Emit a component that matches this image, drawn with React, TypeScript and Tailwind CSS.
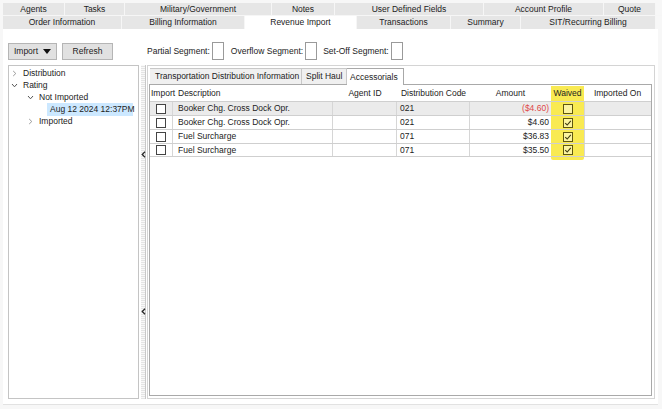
import React from 'react';

const topTabs = [
  { label: 'Agents', w: 'w-[62px]' },
  { label: 'Tasks', w: 'w-[60px]' },
  { label: 'Military/Government', w: 'w-[147px]' },
  { label: 'Notes', w: 'w-[63px]' },
  { label: 'User Defined Fields', w: 'w-[149px]' },
  { label: 'Account Profile', w: 'w-[120px]' },
  { label: 'Quote', w: 'w-[52px]' },
];

const mainTabs = [
  { label: 'Order Information', w: 'w-[119px]' },
  { label: 'Billing Information', w: 'w-[123px]' },
  { label: 'Revenue Import', w: 'w-[112px]', active: true },
  { label: 'Transactions', w: 'w-[94px]' },
  { label: 'Summary', w: 'w-[70px]' },
  { label: 'SIT/Recurring Billing', w: 'w-[135px]' },
];

const rows = [
  { desc: 'Booker Chg. Cross Dock Opr.', code: '021', amount: '($4.60)', neg: true, waived: false, sel: true },
  { desc: 'Booker Chg. Cross Dock Opr.', code: '021', amount: '$4.60', neg: false, waived: true, sel: false },
  { desc: 'Fuel Surcharge', code: '071', amount: '$36.83', neg: false, waived: true, sel: false },
  { desc: 'Fuel Surcharge', code: '071', amount: '$35.50', neg: false, waived: true, sel: false },
];

function Chevron({ open }: { open?: boolean }) {
  return (
    <svg width="7" height="7" viewBox="0 0 7 7" className="shrink-0">
      {open ? (
        <path d="M1 2 L3.5 4.8 L6 2" fill="none" stroke="#555" strokeWidth="1" />
      ) : (
        <path d="M2.2 1 L4.8 3.5 L2.2 6" fill="none" stroke="#999" strokeWidth="1" />
      )}
    </svg>
  );
}

function Box({ checked, waived }: { checked?: boolean; waived?: boolean }) {
  return (
    <div
      className={`w-[10px] h-[10px] border flex items-center justify-center ${
        waived ? 'border-[#5e5610] bg-[#fbf3a0]' : 'border-[#444] bg-white'
      }`}
    >
      {checked && (
        <svg width="8" height="8" viewBox="0 0 8 8">
          <path d="M1.2 4.2 L3.2 6 L6.8 1.8" fill="none" stroke="#3d3a10" strokeWidth="1.1" />
        </svg>
      )}
    </div>
  );
}

function TreeRow({ indent, chevron, open, label, selected }: { indent: string; chevron?: boolean; open?: boolean; label: string; selected?: boolean }) {
  return (
    <div className={`h-[12px] flex items-center whitespace-nowrap ${indent}`}>
      {chevron && <Chevron open={open} />}
      <span
        className={`${chevron ? 'ml-[5px]' : ''} ${selected ? 'bg-[#cce8ff] h-[13px] leading-[13px] w-[86px] pl-[3px]' : 'leading-[12px]'}`}
      >
        {label}
      </span>
    </div>
  );
}

function SplitArrow() {
  return (
    <svg width="5" height="7" viewBox="0 0 5 7" className="relative">
      <path d="M4 0.8 L1.2 3.5 L4 6.2" fill="none" stroke="#222" strokeWidth="1.2" />
    </svg>
  );
}

export default function App() {
  return (
    <div className="w-[662px] h-[409px] bg-[#f7f7f7] text-[8.5px] text-[#222] font-['Liberation_Sans',Arial,sans-serif] overflow-hidden flex flex-col">
      {/* Tab strip */}
      <div className="pl-[3px] pt-[3px]">
        <div className="flex h-[12px]">
          {topTabs.map((t) => (
            <div
              key={t.label}
              className={`${t.w} bg-[#e6e6e6] border-r border-[#f6f6f6] flex items-center justify-center leading-none`}
            >
              {t.label}
            </div>
          ))}
        </div>
        <div className="flex h-[14px] border-t border-[#f6f6f6]">
          {mainTabs.map((t) => (
            <div
              key={t.label}
              className={`${t.w} border-r border-[#f6f6f6] flex items-center justify-center leading-none ${
                t.active ? 'bg-white' : 'bg-[#e6e6e6]'
              }`}
            >
              {t.label}
            </div>
          ))}
        </div>
      </div>

      {/* Main panel */}
      <div className="ml-[3px] mr-[4px] h-[376px] bg-white border-b border-[#e2e2e2] pl-[5px] pt-[13px] flex flex-col">
        {/* Toolbar */}
        <div className="flex items-center h-[18px]">
          <div className="w-[49px] h-[17px] bg-[#e1e1e1] border border-[#b5b5b5] flex items-center justify-center gap-[5px]">
            <span>Import</span>
            <svg width="8" height="5" viewBox="0 0 8 5">
              <path d="M0 0 L8 0 L4 5 Z" fill="#111" />
            </svg>
          </div>
          <div className="ml-[5px] w-[51px] h-[17px] bg-[#e1e1e1] border border-[#b5b5b5] flex items-center justify-center">
            Refresh
          </div>
          <span className="ml-[34px]">Partial Segment:</span>
          <div className="ml-[2px] w-[12px] h-[18px] border border-[#9a9a9a] bg-white" />
          <span className="ml-[7px]">Overflow Segment:</span>
          <div className="ml-[2px] w-[12px] h-[18px] border border-[#9a9a9a] bg-white" />
          <span className="ml-[6px]">Set-Off Segment:</span>
          <div className="ml-[2px] w-[12px] h-[18px] border border-[#9a9a9a] bg-white" />
        </div>

        {/* Body */}
        <div className="mt-[5px] flex h-[334px]">
          {/* Tree */}
          <div className="w-[131px] border border-[#c4c4c4] pt-[1px] pl-[2px]">
            <TreeRow indent="pl-0" chevron label="Distribution" />
            <TreeRow indent="pl-0" chevron open label="Rating" />
            <TreeRow indent="pl-[16px]" chevron open label="Not Imported" />
            <TreeRow indent="pl-[36px]" label="Aug 12 2024 12:37PM" selected />
            <TreeRow indent="pl-[16px]" chevron label="Imported" />
          </div>

          {/* Splitter */}
          <div className="w-[8px] flex flex-col items-center relative">
            <div className="absolute left-[2px] top-0 bottom-0 w-[5px] border-r border-[#c8c8c8] bg-[repeating-linear-gradient(0deg,#e4e4e4_0px,#e4e4e4_1px,#f9f9f9_1px,#f9f9f9_2px)]" />
            <div className="mt-[86px]">
              <SplitArrow />
            </div>
            <div className="mt-[150px]">
              <SplitArrow />
            </div>
          </div>

          {/* Right panel */}
          <div className="w-[508px] border border-[#d4d4d4] pt-[2px] pl-[1px] pr-[2px] pb-[2px] flex flex-col">
            <div className="flex h-[16px] pl-[1px] items-stretch">
              <div className="w-[152px] bg-[#f0f0f0] border-t border-r border-[#c8c8c8] flex items-center pl-[5px]">
                Transportation Distribution Information
              </div>
              <div className="w-[45px] bg-[#f0f0f0] border-t border-r border-[#c8c8c8] flex items-center pl-[4px]">
                Split Haul
              </div>
              <div className="w-[57px] bg-white border-t border-r border-[#a8a8a8] flex items-center pl-[3px] -mb-px z-10">
                Accessorials
              </div>
            </div>
            <div className="flex-1 border border-[#a9a9a9] pt-[1px]">
              {/* Header */}
              <div className="flex h-[15px] items-center">
                <div className="w-[23px] pl-[1px]">Import</div>
                <div className="w-[160px] pl-[5px]">Description</div>
                <div className="w-[64px] text-center">Agent ID</div>
                <div className="w-[73px] text-center">Distribution Code</div>
                <div className="w-[81px] text-center">Amount</div>
                <div className="w-[33px] h-full bg-[#f9ea52] flex items-center justify-center">Waived</div>
                <div className="flex-1 text-center">Imported On</div>
              </div>
              {rows.map((r, i) => (
                <div
                  key={i}
                  className={`flex h-[14px] border-t border-[#cfcfcf] ${i === rows.length - 1 ? 'border-b' : ''} ${
                    r.sel ? 'bg-[#ebebeb]' : 'bg-white'
                  }`}
                >
                  <div className="w-[23px] border-r border-[#d6d6d6] flex items-center justify-center">
                    <Box />
                  </div>
                  <div className="w-[160px] border-r border-[#d6d6d6] flex items-center pl-[5px]">{r.desc}</div>
                  <div className="w-[64px] border-r border-[#d6d6d6]" />
                  <div className="w-[73px] border-r border-[#d6d6d6] flex items-center pl-[3px]">{r.code}</div>
                  <div
                    className={`w-[81px] flex items-center justify-end pr-[2px] ${
                      r.neg ? 'text-[#e04848]' : ''
                    }`}
                  >
                    {r.amount}
                  </div>
                  <div className="w-[33px] bg-[#f9ea52] flex items-center justify-center">
                    <Box checked={r.waived} waived />
                  </div>
                  <div className="flex-1 border-l border-[#d6d6d6]" />
                </div>
              ))}
              <div className="flex h-[3px]">
                <div className="ml-[401px] w-[33px] bg-[#f9ea52] rounded-b-[2px]" />
              </div>
            </div>
          </div>
        </div>
      </div>
    </div>
  );
}
